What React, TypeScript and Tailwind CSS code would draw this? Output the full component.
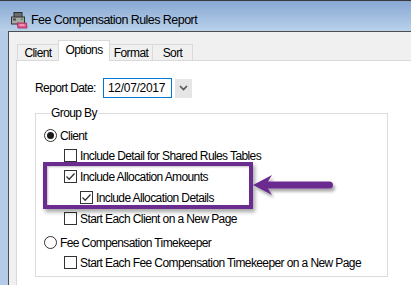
import React from "react"

const tabs = [
  { label: "Client", w: "w-[42px]" },
  { label: "Options", w: "w-[52px]", active: true },
  { label: "Format", w: "w-[44px]" },
  { label: "Sort", w: "w-[41px]" },
]

function Check({ checked }: { checked?: boolean }) {
  return (
    <span className="w-[13px] h-[13px] border border-[#333] bg-white flex items-center justify-center shrink-0 mr-[3px]">
      {checked && (
        <svg width="11" height="11" viewBox="0 0 11 11">
          <path d="M1.5 5.5 L4.2 8.2 L9.5 2.5" fill="none" stroke="#333" strokeWidth="1.3" />
        </svg>
      )}
    </span>
  )
}

function Radio({ checked }: { checked?: boolean }) {
  return (
    <span className="w-[13px] h-[13px] rounded-full border border-[#333] bg-white flex items-center justify-center shrink-0 mr-[3px]">
      {checked && <span className="w-[7px] h-[7px] rounded-full bg-[#1a1a1a]" />}
    </span>
  )
}

function PrinterIcon() {
  return (
    <svg width="18" height="18" viewBox="0 0 18 18">
      <rect x="4" y="1.5" width="8" height="5" fill="#6b6b6b" stroke="#2e2e2e" />
      <rect x="1.5" y="6" width="13" height="7" fill="#a8a8a8" stroke="#333" />
      <rect x="3" y="7.5" width="3" height="2" fill="#4a4a4a" />
      <rect x="11" y="7.5" width="2" height="1.5" fill="#3da33d" />
      <polygon points="7,12 16.5,12 17,17 8,17" fill="#e2588a" stroke="#9b2650" strokeWidth="0.8" />
      <rect x="9.5" y="13.5" width="5" height="1" fill="#ffffff" opacity="0.7" />
    </svg>
  )
}

export default function App() {
  return (
    <div className="relative w-[411px] h-[285px] overflow-hidden flex flex-col bg-[#b7cde8] font-['Liberation_Sans',Arial,sans-serif] text-[12px] text-black">
      {/* title bar */}
      <div className="h-[31px] shrink-0 border-t border-[#3a3a3a] bg-gradient-to-b from-[#88a8d3] to-[#b9d1ea] flex items-center pl-[10px] pt-[8px]">
        <PrinterIcon />
        <span className="ml-[3px] text-[12.5px] tracking-[-0.55px] leading-none">Fee Compensation Rules Report</span>
      </div>

      <div className="flex flex-1 min-h-0">
        {/* left frame */}
        <div className="w-[8px] shrink-0 bg-[#b5cbe7]" />

        {/* client area */}
        <div className="flex-1 flex flex-col border-l border-t border-[#4d4d4d] bg-[#f0f0f0] pl-[7px] pt-[8px] tracking-[-0.6px]">
          <div className="flex items-end pl-[1px] h-[21px] -mb-px relative z-10">
            {tabs.map((t, i) =>
              t.active ? (
                <div
                  key={t.label}
                  className={`${t.w} h-[21px] -ml-px bg-white border-l border-t border-r border-[#d9d9d9] flex items-center justify-center pb-[2px] relative z-10`}
                >
                  {t.label}
                </div>
              ) : (
                <div
                  key={t.label}
                  className={`${t.w} h-[17px] ${i === 0 ? "" : "-ml-px"} bg-[#f0f0f0] border border-[#d9d9d9] flex items-center justify-center`}
                >
                  {t.label}
                </div>
              )
            )}
          </div>

          {/* tab panel */}
          <div className="flex-1 bg-white border-l border-t border-[#d9d9d9] pl-[18px] pt-[17px]">
            <div className="flex items-center h-[20px]">
              <span className="w-[68px]">Report Date:</span>
              <div className="w-[69px] h-[20px] border border-[#0078d7] flex items-center pl-[4px] tracking-[-0.3px]">
                12/07/2017
              </div>
              <div className="ml-[3px] w-[17px] h-[19px] bg-[#e6e6e6] flex items-center justify-center">
                <svg width="9" height="6" viewBox="0 0 9 6">
                  <path d="M1 1 L4.5 4.5 L8 1" fill="none" stroke="#555" strokeWidth="1.6" />
                </svg>
              </div>
            </div>

            <fieldset className="mt-[8px] w-[353px] border border-[#dcdcdc] pl-[8px] pt-[6px] pb-[4px]">
              <legend className="ml-[6px] px-[1px] leading-[14px]">Group By</legend>

              <div className="flex items-center h-[19px]">
                <Radio checked />
                <span>Client</span>
              </div>
              <div className="flex items-center h-[21px] ml-[20px]">
                <Check />
                <span>Include Detail for Shared Rules Tables</span>
              </div>
              <div className="flex items-center h-[21px] ml-[20px]">
                <Check checked />
                <span>Include Allocation Amounts</span>
              </div>
              <div className="flex items-center h-[21px] ml-[36px]">
                <Check checked />
                <span>Include Allocation Details</span>
              </div>
              <div className="flex items-center h-[21px] ml-[20px]">
                <Check />
                <span>Start Each Client on a New Page</span>
              </div>
              <div className="flex items-center h-[21px] mt-[3px]">
                <Radio />
                <span>Fee Compensation Timekeeper</span>
              </div>
              <div className="flex items-center h-[19px] ml-[20px]">
                <Check />
                <span>Start Each Fee Compensation Timekeeper on a New Page</span>
              </div>
            </fieldset>
          </div>
        </div>
      </div>

      {/* annotation: highlight box */}
      <div className="absolute left-[43px] top-[162px] w-[210px] h-[47px] border-4 border-[#6a2c8f] shadow-[inset_1px_1px_2px_rgba(0,0,0,0.25),2px_3px_4px_rgba(0,0,0,0.35)]" />

      {/* annotation: arrow */}
      <svg className="absolute left-[250px] top-[170px]" width="90" height="32" viewBox="0 0 90 32">
        <defs>
          <filter id="sh" x="-10%" y="-30%" width="130%" height="180%">
            <feDropShadow dx="2" dy="3" stdDeviation="1.5" floodColor="#000" floodOpacity="0.35" />
          </filter>
        </defs>
        <path
          d="M3 15 L22 5 L18 11.5 L79.5 11.5 A3.5 3.5 0 0 1 79.5 18.5 L18 18.5 L22 25 Z"
          fill="#6a2c8f"
          filter="url(#sh)"
        />
      </svg>
    </div>
  )
}
